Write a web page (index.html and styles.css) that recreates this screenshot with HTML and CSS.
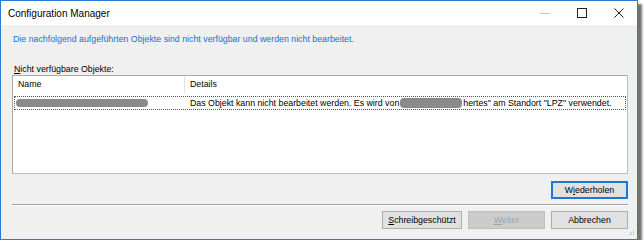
FILE: index.html
```html
<!DOCTYPE html>
<html lang="de">
<head>
    <meta charset="UTF-8">
    <title>Configuration Manager</title>
    <link rel="stylesheet" href="styles.css">
</head>
<body>

    <!-- Dialog Window -->
    <div class="window">

        <!-- Title Bar -->
        <div class="titlebar">
            <span class="title">Configuration Manager</span>
            <div class="caption-buttons">
                <span class="cap-btn minimize">
                    <svg width="10" height="10" viewBox="0 0 10 10"><path d="M0 5.5h10" stroke="#c4c4c4" stroke-width="1"/></svg>
                </span>
                <span class="cap-btn maximize">
                    <svg width="10" height="10" viewBox="0 0 10 10"><rect x="0.5" y="0.5" width="9" height="9" fill="none" stroke="#222" stroke-width="1"/></svg>
                </span>
                <span class="cap-btn close">
                    <svg width="10" height="10" viewBox="0 0 10 10"><path d="M0.5 0.5l9 9M9.5 0.5l-9 9" stroke="#222" stroke-width="1"/></svg>
                </span>
            </div>
        </div>

        <!-- Dialog Body -->
        <div class="dialog">
            <p class="info">Die nachfolgend aufgeführten Objekte sind nicht verfügbar und werden nicht bearbeitet.</p>

            <p class="list-label"><u>N</u>icht verfügbare Objekte:</p>

            <div class="listview">
                <div class="list-header">
                    <div class="col col-name">Name</div>
                    <div class="col col-details">Details</div>
                </div>
                <div class="list-row">
                    <div class="col col-name"><span class="redact redact-name"></span></div>
                    <div class="col col-details">Das Objekt kann nicht bearbeitet werden. Es wird von<span class="redact redact-details"></span>hertes" am Standort "LPZ" verwendet.</div>
                </div>
            </div>

            <div class="retry-row">
                <button class="btn btn-focus">W<u>i</u>ederholen</button>
            </div>

            <div class="separator"></div>

            <div class="button-row">
                <button class="btn"><u>S</u>chreibgeschützt</button>
                <button class="btn btn-disabled"><u>W</u>eiter</button>
                <button class="btn">Abbrechen</button>
            </div>

            <div class="size-grip">
                <svg width="7" height="7" viewBox="0 0 7 7">
                    <rect x="5" y="0" width="1" height="1" fill="#b8b8b8"/>
                    <rect x="3" y="2" width="1" height="1" fill="#b8b8b8"/>
                    <rect x="5" y="2" width="1" height="1" fill="#b8b8b8"/>
                    <rect x="1" y="4" width="1" height="1" fill="#b8b8b8"/>
                    <rect x="3" y="4" width="1" height="1" fill="#b8b8b8"/>
                    <rect x="5" y="4" width="1" height="1" fill="#b8b8b8"/>
                </svg>
            </div>
        </div>
    </div>

</body>
</html>
```

FILE: styles.css
```css
/* General Styles */
body {
    margin: 0;
    padding: 0;
    background-color: #ffffff;
    font-family: 'Liberation Sans', Arial, sans-serif;
    font-size: 8.8px;
    color: #000;
}

/* Window Frame */
.window {
    width: 636px;
    height: 238px;
    border: 1px solid #2a7ad3;
    background-color: #f0f0f0;
    box-shadow: 4px 4px 2px rgba(0, 0, 0, 0.55);
    display: flex;
    flex-direction: column;
}

/* Title Bar */
.titlebar {
    height: 24px;
    background-color: #fff;
    display: flex;
    align-items: center;
    justify-content: space-between;
}

.title {
    font-size: 10px;
    padding-left: 7px;
    color: #000;
}

.caption-buttons {
    display: flex;
    height: 100%;
}

.cap-btn {
    width: 37px;
    display: flex;
    align-items: center;
    justify-content: center;
}

/* Dialog Body */
.dialog {
    flex: 1;
    position: relative;
    padding: 8px 9px 0 11px;
    display: flex;
    flex-direction: column;
}

.info {
    margin: 0;
    line-height: 12px;
    color: #1a6dd0;
    padding-left: 1px;
}

.list-label {
    margin: 18px 0 0 0;
    line-height: 12px;
    padding-left: 2px;
}

/* List View */
.listview {
    height: 97px;
    background-color: #fff;
    border: 1px solid #a9a9a9;
    border-right-color: #bdbdbd;
    border-bottom-color: #bdbdbd;
}

.list-header {
    display: flex;
    height: 17px;
    line-height: 17px;
}

.list-header .col-name {
    border-right: 1px solid #e3e3e3;
}

.list-row {
    display: flex;
    height: 12px;
    line-height: 12px;
    margin: 3px 1px 0 1px;
    border: 1px dotted #555;
}

.col {
    box-sizing: border-box;
    white-space: nowrap;
}

.col-name {
    width: 172px;
    padding-left: 5px;
}

.list-row .col-name {
    width: 170px;
    padding-left: 1px;
}

.col-details {
    padding-left: 5px;
}

/* Redacted Blobs */
.redact {
    display: inline-block;
    vertical-align: middle;
    height: 8px;
    background-color: #8a8a8a;
    border-radius: 4px;
    filter: blur(0.6px);
}

.redact-name {
    width: 132px;
    margin-top: -2px;
}

.redact-details {
    width: 62px;
    height: 10px;
    margin: -2px 1px 0 1px;
}

/* Buttons */
.retry-row {
    display: flex;
    justify-content: flex-end;
    margin-top: 7px;
}

.btn {
    width: 77px;
    height: 18px;
    padding: 0;
    font-family: 'Liberation Sans', Arial, sans-serif;
    font-size: 8.8px;
    color: #000;
    background-color: #e1e1e1;
    border: 1px solid #adadad;
}

.btn-focus {
    border: 2px solid #1b79d6;
}

.btn-disabled {
    background-color: #cccccc;
    border-color: #bfbfbf;
    color: #a3a3a3;
}

.separator {
    margin-top: 5px;
    height: 1px;
    background-color: #a0a0a0;
    border-bottom: 1px solid #fff;
}

.button-row {
    display: flex;
    justify-content: flex-end;
    gap: 6px;
    margin-top: 5px;
}

.button-row .btn:first-child {
    width: 80px;
}

.size-grip {
    position: absolute;
    right: 2px;
    bottom: 2px;
    line-height: 0;
}
```
